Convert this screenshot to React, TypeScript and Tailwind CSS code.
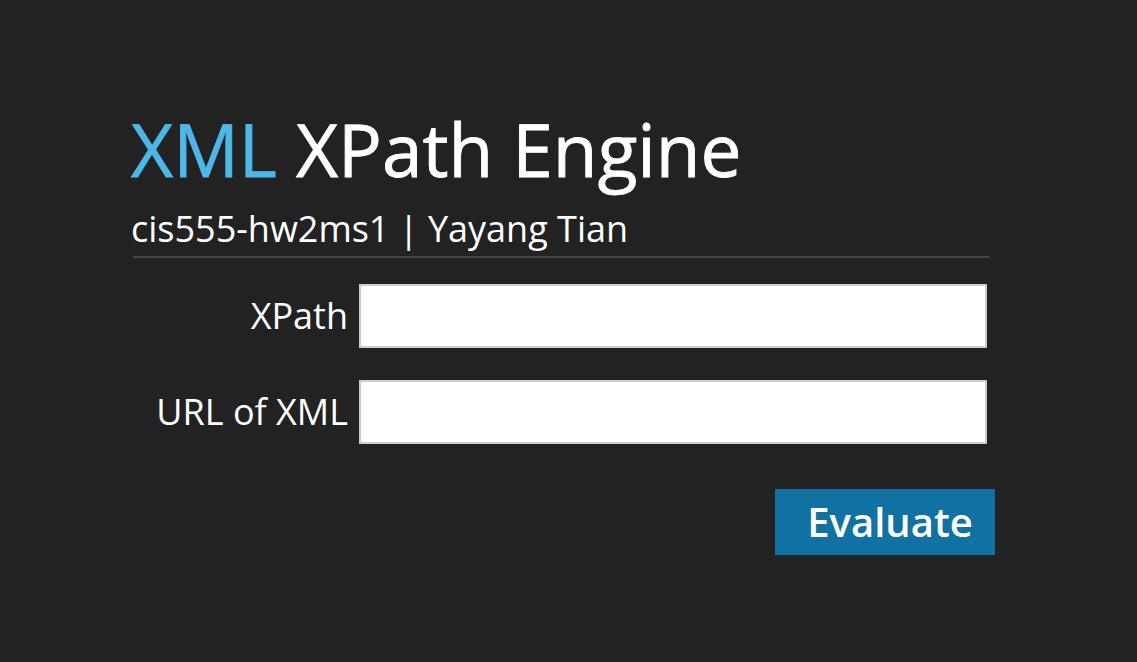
export default function App() {
  return (
    <div
      className="min-h-screen w-full bg-[#222222] text-white"
      style={{ fontFamily: '"Open Sans", "Noto Sans", sans-serif' }}
    >
      <div className="pl-[131px] pt-[113px] w-[995px]">
        <h1 className="text-[73px] leading-[72px] font-normal [-webkit-text-stroke:0.8px_currentColor]">
          <span className="text-[#4db7e7]">XML</span> XPath Engine
        </h1>
        <p className="mt-[26px] text-[36px] leading-[36px]">cis555-hw2ms1 | Yayang Tian</p>
        <div className="mt-[9px] ml-[2px] w-[857px] h-[2px] bg-[#454545]" />

        <form className="mt-[26px] flex flex-col" onSubmit={(e) => e.preventDefault()}>
          <div className="flex items-center">
            <label className="w-[217px] text-right text-[36px] leading-[36px]">XPath</label>
            <input
              type="text"
              className="ml-[11px] w-[628px] h-[64px] bg-white border-2 border-[#cccccc] outline-none text-black px-2"
            />
          </div>
          <div className="mt-[32px] flex items-center">
            <label className="w-[217px] text-right text-[36px] leading-[36px]">URL of XML</label>
            <input
              type="text"
              className="ml-[11px] w-[628px] h-[64px] bg-white border-2 border-[#cccccc] outline-none text-black px-2"
            />
          </div>
          <div className="mt-[45px] flex justify-end">
            <button
              type="submit"
              className="w-[220px] h-[66px] bg-[#1271a3] text-white text-[40px] leading-[40px] font-semibold pl-[10px]"
            >
              Evaluate
            </button>
          </div>
        </form>
      </div>
    </div>
  );
}
